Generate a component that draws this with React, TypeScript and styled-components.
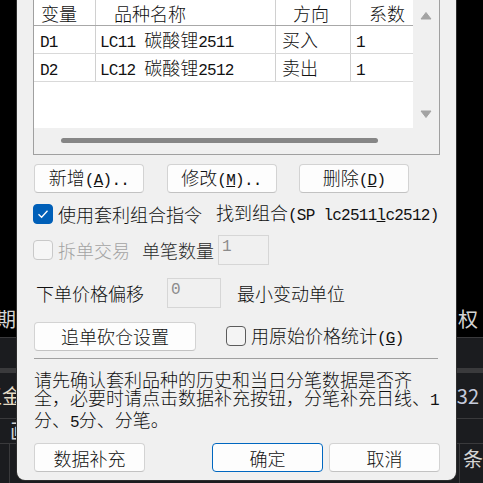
import React from "react";
import styled, { createGlobalStyle } from "styled-components";

const CJK = `"Noto Sans CJK SC", "Noto Sans", sans-serif`;
const MONO = `"Liberation Mono", "Noto Sans CJK SC", monospace`;

const Global = createGlobalStyle`
  html, body { margin: 0; padding: 0; background: #000; }
  body { width: 483px; height: 483px; overflow: hidden; }
`;

const Screen = styled.div`
  position: relative;
  width: 483px;
  height: 483px;
  overflow: hidden;
  display: flex;
  flex-direction: column;
  background: #000;
  font-family: ${CJK};
`;

const Band = styled.div<{ $h?: number; $bg: string }>`
  flex: ${(p) => (p.$h ? "none" : "1")};
  height: ${(p) => (p.$h ? `${p.$h}px` : "auto")};
  background: ${(p) => p.$bg};
  display: flex;
  align-items: center;
  justify-content: space-between;
  overflow: hidden;
`;

const Rule = styled.div`
  flex: none;
  height: 1px;
  background: #3a3a3c;
`;

const BgText = styled.span<{ $c?: string; $ml?: number; $mr?: number }>`
  font-size: 20px;
  line-height: 1;
  white-space: nowrap;
  color: ${(p) => p.$c ?? "#d4d4d4"};
  margin-left: ${(p) => p.$ml ?? 0}px;
  margin-right: ${(p) => p.$mr ?? 0}px;
`;

const GridBand = styled.div`
  flex: 1;
  background: #1b1c1f;
  display: flex;
  align-items: stretch;
`;

const GridCell = styled.div<{ $w?: number }>`
  flex: ${(p) => (p.$w ? "none" : "1")};
  width: ${(p) => (p.$w ? `${p.$w}px` : "auto")};
  border-right: 1px solid #3a3a3c;
`;

const GridTail = styled.div`
  flex: none;
  width: 20px;
  padding: 4px 0 0 3px;
`;

/* ---------- dialog ---------- */

const Dialog = styled.div`
  position: absolute;
  left: 17px;
  top: 0;
  bottom: 3px;
  width: 439px;
  box-sizing: border-box;
  background: #f0f0f0;
  border-radius: 0 0 8px 8px;
  box-shadow: 0 0 0 1px #2e2e2e;
  padding: 0 16px;
  display: flex;
  flex-direction: column;
  color: #111;
  font-family: ${CJK};
  font-size: 18px;
  font-weight: 300;
`;

const Half = styled.span`
  font-family: ${MONO};
  font-size: 16px;
  font-weight: 400;
  letter-spacing: -0.75px;
`;

const ListBox = styled.div`
  margin-top: -1px;
  height: 156px;
  box-sizing: border-box;
  border: 1px solid #a0a0a0;
  display: grid;
  grid-template-columns: 1fr 26px;
  grid-template-rows: 128px 1fr;
  flex: none;
`;

const ListArea = styled.div`
  background: #fff;
  overflow: hidden;
`;

const TableRow = styled.div<{ $head?: boolean }>`
  display: grid;
  grid-template-columns: 62px 180px 75px 1fr;
  height: ${(p) => (p.$head ? 26 : 28)}px;
  box-sizing: border-box;
  border-bottom: 1px solid ${(p) => (p.$head ? "#a8a8a8" : "#d9d9d9")};
`;

const Cell = styled.div<{ $pl: number; $head?: boolean; $last?: boolean }>`
  box-sizing: border-box;
  padding-left: ${(p) => p.$pl}px;
  padding-top: ${(p) => (p.$head ? 2 : 0)}px;
  line-height: ${(p) => (p.$head ? 23 : 27)}px;
  border-right: ${(p) => (p.$last ? "none" : "1px solid #d0d0d0")};
  white-space: pre;
  overflow: hidden;
  color: #111;
`;

const VScroll = styled.div`
  background: #f0f0f0;
  display: flex;
  flex-direction: column;
  justify-content: space-between;
  align-items: center;
  padding: 12px 0 10px;
`;

const HScroll = styled.div`
  grid-column: 1 / span 2;
  background: #f0f0f0;
  padding-top: 10px;
  padding-left: 27px;
`;

const Thumb = styled.div`
  width: 317px;
  height: 5px;
  border-radius: 3px;
  background: #868686;
`;

const ButtonRow = styled.div`
  display: flex;
  gap: 22.5px;
  margin-top: 9px;
  padding-left: 1px;
  flex: none;
`;

const Btn = styled.button<{ $w?: number; $default?: boolean }>`
  width: ${(p) => p.$w ?? 110}px;
  height: 29px;
  box-sizing: border-box;
  padding: 0;
  margin: 0;
  border: 1px solid ${(p) => (p.$default ? "#0067c0" : "#d3d3d3")};
  border-bottom-color: ${(p) => (p.$default ? "#0067c0" : "#c2c2c2")};
  border-radius: 4px;
  background: #fdfdfd;
  color: #111;
  font-family: ${CJK};
  font-size: 18px;
  font-weight: 300;
  line-height: 1;
  text-align: center;
  white-space: nowrap;
`;

const Row = styled.div<{ $mt: number; $h: number; $pl?: number }>`
  display: flex;
  align-items: center;
  margin-top: ${(p) => p.$mt}px;
  height: ${(p) => p.$h}px;
  padding-left: ${(p) => p.$pl ?? 0}px;
  flex: none;
  white-space: nowrap;
`;

const Box = styled.span<{ $state: "on" | "off" | "disabled"; $ml?: number }>`
  flex: none;
  width: 20px;
  height: 20px;
  box-sizing: border-box;
  border-radius: 4px;
  margin-left: ${(p) => p.$ml ?? 0}px;
  margin-right: 5px;
  display: flex;
  align-items: center;
  justify-content: center;
  background: ${(p) =>
    p.$state === "on" ? "#005fb8" : p.$state === "disabled" ? "#f6f6f6" : "#f4f4f4"};
  border: 1px solid
    ${(p) =>
      p.$state === "on" ? "#005fb8" : p.$state === "disabled" ? "#c9c9c9" : "#5c5c5c"};
`;

const Label = styled.span<{ $dim?: boolean; $ml?: number; $soft?: boolean }>`
  color: ${(p) => (p.$dim ? "#a3a3a3" : p.$soft ? "#2a2a2a" : "#111")};
  margin-left: ${(p) => p.$ml ?? 0}px;
  line-height: 1;
`;

const Field = styled.div<{ $w: number; $ml: number }>`
  width: ${(p) => p.$w}px;
  height: 30px;
  box-sizing: border-box;
  margin-left: ${(p) => p.$ml}px;
  border: 1px solid #d6d6d6;
  background: #f0f0f0;
  color: #8c8c8c;
  font-family: ${MONO};
  font-size: 16px;
  font-weight: 400;
  padding: 3px 0 0 3px;
  line-height: 1;
`;

const Separator = styled.div`
  margin-top: 7px;
  margin-left: 1px;
  width: 404px;
  height: 1px;
  background: #a0a0a0;
  flex: none;
`;

const Note = styled.p`
  margin: 11px 0 0;
  padding-left: 1px;
  font-size: 18px;
  line-height: 18px;
  color: #111;
  white-space: nowrap;
`;

const Footer = styled.div`
  display: flex;
  margin-top: 11px;
  padding-left: 1px;
  flex: none;
`;

const FooterRight = styled.div`
  margin-left: auto;
  display: flex;
  gap: 6px;
`;

const Arrow = ({ down }: { down?: boolean }) => (
  <svg width="12" height="8" viewBox="0 0 12 8">
    <path
      d={down ? "M1 1 H11 L6 7.5 Z" : "M1 7 H11 L6 0.5 Z"}
      fill="#a3a3a3"
      stroke="#a3a3a3"
      strokeWidth="1"
      strokeLinejoin="round"
    />
  </svg>
);

const Check = () => (
  <svg width="12" height="10" viewBox="0 0 12 10">
    <path d="M1.5 5.2 L4.6 8.2 L10.5 1.8" fill="none" stroke="#fff" strokeWidth="1.3" />
  </svg>
);

const rows = [
  { v: "D1", code: "LC11 ", name: "碳酸锂", num: "2511", dir: "买入", k: "1" },
  { v: "D2", code: "LC12 ", name: "碳酸锂", num: "2512", dir: "卖出", k: "1" },
];

export default function App() {
  return (
    <Screen>
      <Global />
      <Band $h={300} $bg="#000" />
      <Band $h={37} $bg="#000">
        <BgText $ml={-4}>期</BgText>
        <BgText $mr={5}>期权</BgText>
      </Band>
      <Rule />
      <Band $h={30} $bg="#1b1c1f" />
      <Band $h={5} $bg="#3a3a3c" />
      <Band $h={45} $bg="#1b1c1f">
        <BgText $ml={-18} $c="#e6dcc6">王金</BgText>
        <BgText $mr={4} $c="#c4cadb">32</BgText>
      </Band>
      <Rule />
      <Band $h={24} $bg="#1b1c1f">
        <BgText $ml={10}>画</BgText>
      </Band>
      <Rule />
      <GridBand>
        <GridCell $w={9} />
        <GridCell />
        <GridTail>
          <BgText>条</BgText>
        </GridTail>
      </GridBand>

      <Dialog>
        <ListBox>
          <ListArea>
            <TableRow $head>
              <Cell $head $pl={7}>变量</Cell>
              <Cell $head $pl={18}>品种名称</Cell>
              <Cell $head $pl={17}>方向</Cell>
              <Cell $head $pl={18} $last>系数</Cell>
            </TableRow>
            {rows.map((r) => (
              <TableRow key={r.v}>
                <Cell $pl={6}><Half>{r.v}</Half></Cell>
                <Cell $pl={4}>
                  <Half>{r.code}</Half>
                  {r.name}
                  <Half>{r.num}</Half>
                </Cell>
                <Cell $pl={6}>{r.dir}</Cell>
                <Cell $pl={5} $last><Half>{r.k}</Half></Cell>
              </TableRow>
            ))}
          </ListArea>
          <VScroll>
            <Arrow />
            <Arrow down />
          </VScroll>
          <HScroll>
            <Thumb />
          </HScroll>
        </ListBox>

        <ButtonRow>
          <Btn>新增<Half>(<u>A</u>)..</Half></Btn>
          <Btn>修改<Half>(<u>M</u>)..</Half></Btn>
          <Btn>删除<Half>(<u>D</u>)</Half></Btn>
        </ButtonRow>

        <Row $mt={10} $h={21}>
          <Box $state="on"><Check /></Box>
          <Label>使用套利组合指令</Label>
          <Label $ml={14}>
            找到组合<Half>(SP lc2511<u>l</u>c2512)</Half>
          </Label>
        </Row>

        <Row $mt={11} $h={30}>
          <Box $state="disabled" />
          <Label $dim>拆单交易</Label>
          <Label $ml={12} $soft>单笔数量</Label>
          <Field $w={51} $ml={4}>1</Field>
        </Row>

        <Row $mt={13} $h={30} $pl={3}>
          <Label>下单价格偏移</Label>
          <Field $w={54} $ml={23}>0</Field>
          <Label $ml={16}>最小变动单位</Label>
        </Row>

        <Row $mt={13} $h={30} $pl={1}>
          <Btn $w={162}>追单砍仓设置</Btn>
          <Box $state="off" $ml={30} />
          <Label>用原始价格统计<Half>(<u>G</u>)</Half></Label>
        </Row>

        <Separator />

        <Note>
          请先确认套利品种的历史和当日分笔数据是否齐
          <br />
          全，必要时请点击数据补充按钮，分笔补充日线、<Half>1</Half>
          <br />
          分、<Half>5</Half>分、分笔。
        </Note>

        <Footer>
          <Btn $w={111}>数据补充</Btn>
          <FooterRight>
            <Btn $w={111} $default>确定</Btn>
            <Btn $w={111}>取消</Btn>
          </FooterRight>
        </Footer>
      </Dialog>
    </Screen>
  );
}
